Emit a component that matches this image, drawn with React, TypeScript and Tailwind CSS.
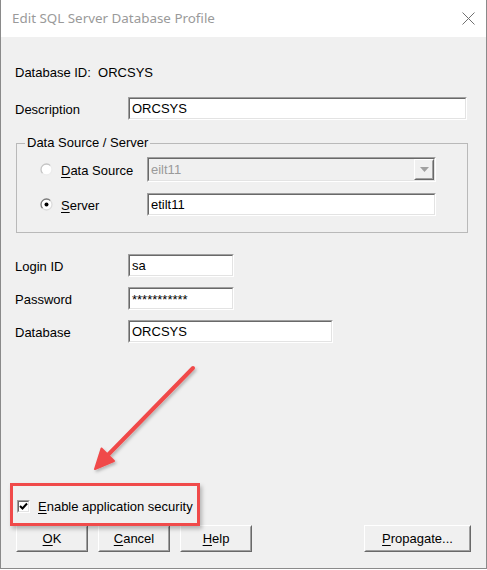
import React from "react";

const SANS = "font-['Liberation_Sans',Arial,sans-serif]";

function Sunken({ className = "", inner = "bg-white", children }: { className?: string; inner?: string; children?: React.ReactNode }) {
  return (
    <div className={`border border-t-[#a0a0a0] border-l-[#a0a0a0] border-b-white border-r-white ${className}`}>
      <div className={`h-full w-full border border-t-[#696969] border-l-[#696969] border-b-[#e3e3e3] border-r-[#e3e3e3] ${inner} flex items-center pl-[2px] overflow-hidden`}>
        {children}
      </div>
    </div>
  );
}

function Button({ className = "", children }: { className?: string; children: React.ReactNode }) {
  return (
    <div className={`border border-t-white border-l-white border-b-[#696969] border-r-[#696969] ${className}`}>
      <div className="h-full w-full border border-t-[#f0f0f0] border-l-[#f0f0f0] border-b-[#a0a0a0] border-r-[#a0a0a0] bg-[#f0f0f0] flex items-center justify-center text-black">
        {children}
      </div>
    </div>
  );
}

function Radio({ checked, light }: { checked?: boolean; light?: boolean }) {
  return (
    <svg width="13" height="13" viewBox="0 0 13 13" className="shrink-0">
      <circle cx="6.5" cy="6.5" r="5.5" fill="#fff" />
      <path d="M2.61 10.39 A5.5 5.5 0 0 1 10.39 2.61" fill="none" stroke={light ? "#c4c4c4" : "#7a7a7a"} strokeWidth="1.3" />
      <path d="M10.39 2.61 A5.5 5.5 0 0 1 2.61 10.39" fill="none" stroke={light ? "#ececec" : "#dcdcdc"} strokeWidth="1.3" />
      {checked && <circle cx="6.5" cy="6.5" r="2" fill="#000" />}
    </svg>
  );
}

export default function App() {
  return (
    <div className={`relative w-[487px] h-[570px] bg-white overflow-hidden ${SANS} text-[13px] text-black`}>
      <div className="w-[487px] h-[569px] border-l border-r border-b border-[#8a8a8a] flex flex-col">
        {/* Title bar */}
        <div className="h-[37px] bg-white flex items-center pl-[11px] pr-[11px] shrink-0">
          <span className="font-['Noto_Sans',sans-serif] text-[13.4px] text-[#9a9a9a]">Edit SQL Server Database Profile</span>
          <svg width="13" height="13" viewBox="0 0 13 13" className="ml-auto">
            <path d="M0.5 0.5 L12.5 12.5 M12.5 0.5 L0.5 12.5" stroke="#707070" strokeWidth="1" />
          </svg>
        </div>
        {/* Body */}
        <div className="flex-1 bg-[#f0f0f0] flex flex-col pl-[14px] pr-[15px]">
          <div className="mt-[28px] h-[16px] leading-[16px] whitespace-pre">Database ID:  ORCSYS</div>

          <div className="mt-[16px] h-[23px] flex items-center">
            <div className="w-[113px] pt-[2px]">Description</div>
            <Sunken className="w-[339px] h-[23px]">ORCSYS</Sunken>
          </div>

          <fieldset className="mt-[15px] ml-[1px] w-[452px] h-[98px] border border-[#b9b9b9] rounded-none">
            <legend className="ml-[8px] px-[2px] h-[16px] leading-[16px]">Data Source / Server</legend>
            <div className="mt-[6px] h-[25px] flex items-center pl-[23px]">
              <Radio light />
              <div className="ml-[8px] w-[86px] pt-[2px]"><span className="underline underline-offset-2">D</span>ata Source</div>
              <Sunken className="w-[289px] h-[25px]" inner="bg-[#f0f0f0]">
                <span className="text-[#9a9a9a] flex-1">eilt11</span>
                <Button className="w-[20px] h-[21px] shrink-0">
                  <svg width="9" height="5" viewBox="0 0 9 5"><path d="M0 0 H9 L4.5 5 Z" fill="#a0a0a0" /></svg>
                </Button>
              </Sunken>
            </div>
            <div className="mt-[11px] h-[23px] flex items-center pl-[23px]">
              <Radio checked />
              <div className="ml-[8px] w-[86px] pt-[2px]"><span className="underline underline-offset-2">S</span>erver</div>
              <Sunken className="w-[289px] h-[23px]">etilt11</Sunken>
            </div>
          </fieldset>

          <div className="mt-[21px] h-[23px] flex items-center">
            <div className="w-[113px] pt-[2px]">Login ID</div>
            <Sunken className="w-[106px] h-[23px]">sa</Sunken>
          </div>
          <div className="mt-[10px] h-[23px] flex items-center">
            <div className="w-[113px] pt-[2px]">Password</div>
            <Sunken className="w-[106px] h-[23px]"><span className="pt-[3px]">***********</span></Sunken>
          </div>
          <div className="mt-[10px] h-[23px] flex items-center">
            <div className="w-[113px] pt-[2px]">Database</div>
            <Sunken className="w-[205px] h-[23px]">ORCSYS</Sunken>
          </div>

          <div className="mt-[157px] h-[13px] flex items-center pl-[2px]">
            <Sunken className="w-[13px] h-[13px] shrink-0">
              <svg width="9" height="9" viewBox="0 0 9 9" className="-ml-[2px]"><path d="M1 4 L3.5 6.5 L8 1.5" fill="none" stroke="#000" strokeWidth="2" /></svg>
            </Sunken>
            <div className="ml-[8px] pt-[1px]"><span className="underline underline-offset-2">E</span>nable application security</div>
          </div>

          <div className="mt-[12px] h-[27px] flex items-center pl-[1px]">
            <Button className="w-[72px] h-[27px]"><span><span className="underline underline-offset-2">O</span>K</span></Button>
            <Button className="ml-[10px] w-[72px] h-[27px]"><span><span className="underline underline-offset-2">C</span>ancel</span></Button>
            <Button className="ml-[10px] w-[72px] h-[27px]"><span><span className="underline underline-offset-2">H</span>elp</span></Button>
            <Button className="ml-auto w-[107px] h-[27px]"><span><span className="underline underline-offset-2">P</span>ropagate...</span></Button>
          </div>
        </div>
      </div>

      {/* Annotation overlay: red highlight and arrow */}
      <div className="absolute left-[10px] top-[483px] w-[190px] h-[43px] border-[3px] border-[#f04a4a] shadow-[2px_3px_4px_rgba(0,0,0,0.25)] pointer-events-none" />
      <svg className="absolute left-0 top-0 pointer-events-none" width="487" height="570" viewBox="0 0 487 570">
        <defs>
          <filter id="sh" x="-20%" y="-20%" width="140%" height="140%">
            <feDropShadow dx="1.5" dy="2" stdDeviation="1.5" floodColor="#000" floodOpacity="0.25" />
          </filter>
        </defs>
        <g filter="url(#sh)">
          <line x1="193" y1="368" x2="104" y2="459" stroke="#f04a4a" strokeWidth="4" strokeLinecap="round" />
          <polygon points="95,469 101.5,448.5 114,461" fill="#f04a4a" stroke="#f04a4a" strokeWidth="2" strokeLinejoin="round" />
        </g>
      </svg>
    </div>
  );
}
